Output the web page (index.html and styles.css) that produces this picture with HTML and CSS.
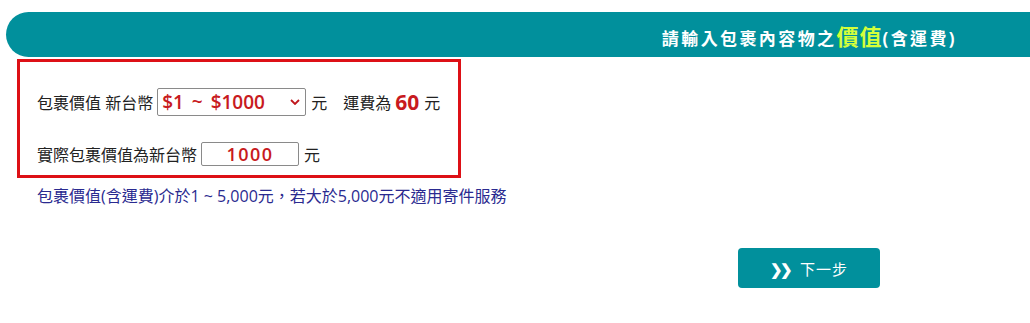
FILE: index.html
```html
<!DOCTYPE html>
<html>
<head>
  <meta charset="utf-8">
  <title>包裹價值</title>
  <link rel="stylesheet" href="styles.css">
</head>
<body>
  <div class="title-bar">
    <h3>請輸入包裹內容物之<span class="hl">價值</span>(含運費)</h3>
  </div>

  <div class="value-box">
    <div class="row">
      <span>包裹價值 新台幣</span>
      <div class="select-wrap">
        <select class="range-select">
          <option>$1 ~ $1000</option>
        </select>
        <svg class="caret" viewBox="0 0 10 6" width="10" height="6"><path d="M1 1l4 4 4-4" fill="none" stroke="#c0161c" stroke-width="1.8"/></svg>
      </div>
      <span>元</span>
      <span class="fee-label">運費為</span>
      <span class="fee">60</span>
      <span>元</span>
    </div>
    <div class="row row-2">
      <span>實際包裹價值為新台幣</span>
      <input type="text" class="value-input" value="1000">
      <span>元</span>
    </div>
  </div>

  <p class="note">包裹價值(含運費)介於1 ~ 5,000元，若大於5,000元不適用寄件服務</p>

  <div class="actions">
    <button class="next-btn"><span class="chev">❯❯</span>下一步</button>
  </div>
</body>
</html>
```

FILE: styles.css
```css
body {
  margin: 0;
  font-family: "Open Sans", "Noto Sans CJK TC", sans-serif;
  font-size: 16px;
  color: #222;
  background: #fff;
}

/* Header bar */
.title-bar {
  margin: 12px 0 0 6px;
  height: 45px;
  background-color: #01909c;
  border-radius: 23px 0 0 23px;
  display: flex;
  align-items: center;
  justify-content: flex-end;
  padding-right: 73px;
}
.title-bar h3 {
  margin: 0;
  color: #fff;
  font-size: 17px;
  font-weight: 700;
  letter-spacing: 2.4px;
}
.title-bar .hl {
  color: #d4ff3a;
  font-size: 22px;
  letter-spacing: 1px;
}

/* Red framed box */
.value-box {
  margin: 2px 0 0 17px;
  width: 404px;
  height: 87px;
  border: 3px solid #dd1016;
  padding: 26px 17px 0;
}
.row { display: flex; align-items: center; height: 28px; }
.row-2 { margin-top: 26px; height: 24px; }

.select-wrap { position: relative; margin: 0 5px 0 4px; }
.range-select {
  width: 149px;
  height: 28px;
  border: 1px solid #8a8a8a;
  border-radius: 2px;
  background: #fff;
  color: #c81a20;
  font-family: "Open Sans", sans-serif;
  font-size: 19px;
  font-weight: 600;
  word-spacing: 3px;
  padding: 0 4px;
  appearance: none;
}
.caret { position: absolute; right: 6px; top: 11px; pointer-events: none; }

.fee-label { margin-left: 16px; }
.fee { color: #c81a20; font-size: 21px; font-weight: 700; margin: 0 5px 0 4px; }

.value-input {
  width: 98px;
  height: 24px;
  box-sizing: border-box;
  border: 1px solid #8a8a8a;
  border-radius: 2px;
  margin: 0 5px 0 4px;
  text-align: center;
  color: #c81a20;
  font-family: "Open Sans", sans-serif;
  font-size: 18px;
  font-weight: 600;
  letter-spacing: 1.5px;
}

.note {
  margin: 5px 0 0 37px;
  color: #2a2a90;
  font-size: 16px;
}

.actions { display: flex; padding-left: 738px; margin-top: 41px; }
.next-btn {
  width: 142px;
  height: 40px;
  border: none;
  border-radius: 4px;
  background-color: #01909c;
  color: #fff;
  font-family: "Noto Sans CJK TC", sans-serif;
  font-size: 15px;
  letter-spacing: 1px;
  display: flex;
  align-items: center;
  justify-content: center;
  gap: 6px;
}
.chev { font-size: 15px; font-weight: 700; letter-spacing: -3px; margin-right: 4px; }
```
